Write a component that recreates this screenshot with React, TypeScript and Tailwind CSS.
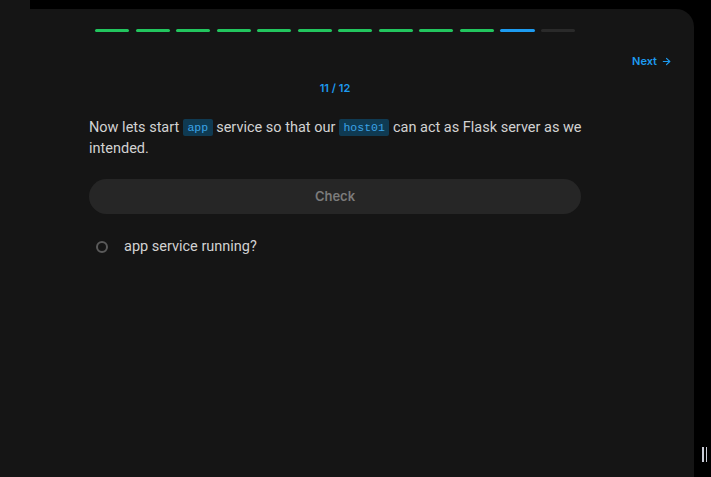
import React from 'react'

const STEPS = 12
const CURRENT = 11

function Code({ children }: { children: React.ReactNode }) {
  return (
    <code className="rounded-[2px] bg-[#0f3a52] px-[4.5px] py-[2px] align-[1px] font-['Liberation_Mono',monospace] text-[11.5px] leading-none text-[#3ba3e6]">
      {children}
    </code>
  )
}

export default function App() {
  return (
    <div className="flex h-screen w-full bg-black font-['Roboto',sans-serif]">
      {/* thin left rail */}
      <div className="w-[30px] shrink-0 bg-[#151515]" />

      {/* main panel */}
      <div className="flex flex-1 flex-col pt-[9px]">
        <div className="flex flex-1 flex-col rounded-tr-[18px] bg-[#151515]">
          <div className="ml-[59px] w-[492px]">
            {/* progress */}
            <div className="mt-[20px] flex h-[3px] gap-[6.5px] px-[6px]">
              {Array.from({ length: STEPS }).map((_, i) => (
                <div
                  key={i}
                  className={
                    i < CURRENT - 1
                      ? 'flex-1 rounded-full bg-[#22c55e]'
                      : i === CURRENT - 1
                        ? 'flex-1 rounded-full bg-[#1d9bf0]'
                        : 'flex-1 rounded-full bg-[#2a2a2a]'
                  }
                />
              ))}
            </div>
          </div>

          <div className="mt-[21px] flex justify-end pr-[22px]">
            <button className="flex items-center gap-[4px] font-['Inter',sans-serif] text-[11px] font-semibold leading-[16px] text-[#1d9bf0]">
              Next
              <svg width="11" height="11" viewBox="0 0 24 24" fill="none" stroke="currentColor" strokeWidth="2.5" strokeLinecap="round" strokeLinejoin="round">
                <path d="M5 12h14" />
                <path d="m12 5 7 7-7 7" />
              </svg>
            </button>
          </div>

          <div className="ml-[59px] w-[492px]">
            <div className="mt-[11px] text-center font-['Inter',sans-serif] text-[11px] font-semibold leading-[16px] text-[#1d9bf0]">
              {CURRENT} / {STEPS}
            </div>

            <p className="mt-[21px] w-[504px] text-[14.5px] leading-[21px] text-[#d2d2d2]">
              Now lets start <Code>app</Code> service so that our <Code>host01</Code> can act as Flask server as we
              intended.
            </p>

            <button className="mt-[20px] flex h-[35px] w-full items-center justify-center rounded-full bg-[#262626] font-['Inter',sans-serif] text-[13px] font-semibold text-[#7b7b7b]">
              Check
            </button>

            <div className="mt-[22px] flex items-center">
              <div className="ml-[7px] h-[12px] w-[12px] rounded-full border-[2px] border-[#5a5a5a]" />
              <span className="ml-[16px] text-[14.5px] leading-[21px] text-[#d2d2d2]">app service running?</span>
            </div>
          </div>
        </div>
      </div>

      {/* right gutter */}
      <div className="flex w-[17px] shrink-0 flex-col justify-end pb-[15px] pl-[8px]">
        <div className="flex h-[15px] gap-[2px]">
          <div className="w-[1.5px] bg-[#c9ccd6]" />
          <div className="w-[1.5px] bg-[#c9ccd6]" />
        </div>
      </div>
    </div>
  )
}
